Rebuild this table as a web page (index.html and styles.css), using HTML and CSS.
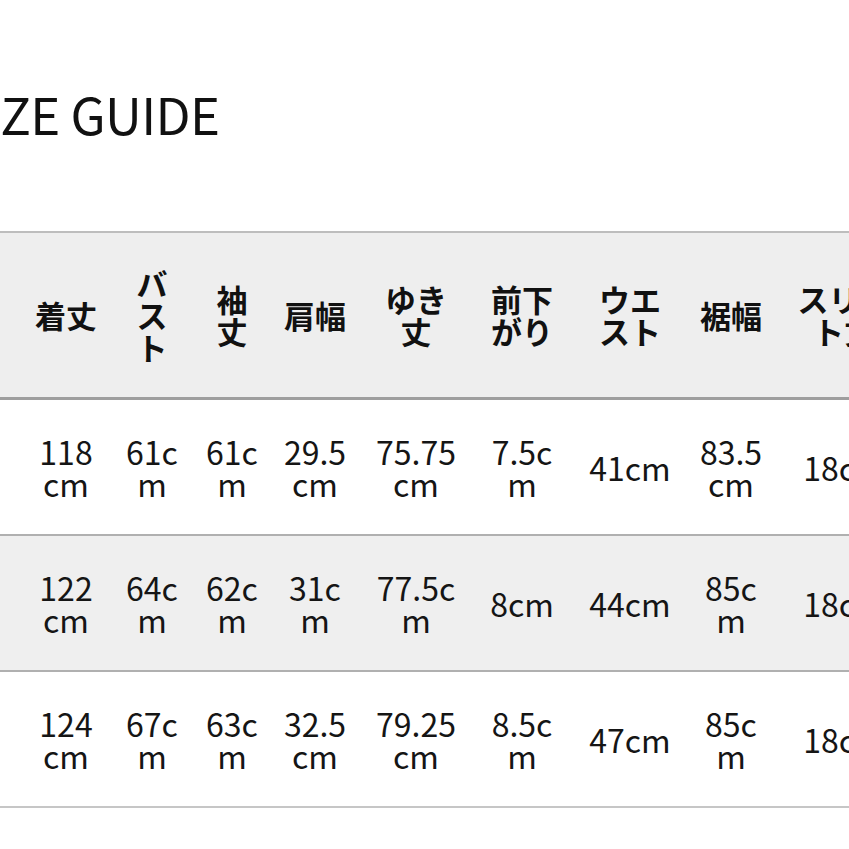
FILE: index.html
```html
<!DOCTYPE html>
<html lang="ja">
<head>
<meta charset="utf-8">
<title>SIZE GUIDE</title>
<link rel="stylesheet" href="styles.css">
</head>
<body>
<main class="page">
  <h1 class="title">SIZE GUIDE</h1>
  <table class="size-table">
    <colgroup>
      <col class="c-size">
      <col class="c-len">
      <col class="c-bust">
      <col class="c-sleeve">
      <col class="c-shoulder">
      <col class="c-yuki">
      <col class="c-front">
      <col class="c-waist">
      <col class="c-hem">
      <col class="c-slit">
    </colgroup>
    <thead>
      <tr>
        <th>サイズ</th>
        <th>着丈</th>
        <th>バ<br>ス<br>ト</th>
        <th>袖<br>丈</th>
        <th>肩幅</th>
        <th>ゆき<br>丈</th>
        <th>前下<br>がり</th>
        <th>ウエ<br>スト</th>
        <th>裾幅</th>
        <th>スリッ<br>ト丈</th>
      </tr>
    </thead>
    <tbody>
      <tr>
        <td>S</td>
        <td>118<br>cm</td>
        <td>61c<br>m</td>
        <td>61c<br>m</td>
        <td>29.5<br>cm</td>
        <td>75.75<br>cm</td>
        <td>7.5c<br>m</td>
        <td>41cm</td>
        <td>83.5<br>cm</td>
        <td>18cm</td>
      </tr>
      <tr class="alt">
        <td>M</td>
        <td>122<br>cm</td>
        <td>64c<br>m</td>
        <td>62c<br>m</td>
        <td>31c<br>m</td>
        <td>77.5c<br>m</td>
        <td>8cm</td>
        <td>44cm</td>
        <td>85c<br>m</td>
        <td>18cm</td>
      </tr>
      <tr>
        <td>L</td>
        <td>124<br>cm</td>
        <td>67c<br>m</td>
        <td>63c<br>m</td>
        <td>32.5<br>cm</td>
        <td>79.25<br>cm</td>
        <td>8.5c<br>m</td>
        <td>47cm</td>
        <td>85c<br>m</td>
        <td>18cm</td>
      </tr>
    </tbody>
  </table>
</main>
</body>
</html>
```

FILE: styles.css
```css
html, body {
  margin: 0;
  padding: 0;
  background: #ffffff;
  overflow: hidden;
}

.page {
  width: 849px;
  height: 849px;
  overflow: hidden;
  font-family: "Noto Sans CJK JP", "Noto Sans", sans-serif;
  color: #111111;
}

.title {
  margin: 88px 0 0 -44px;
  font-size: 51px;
  line-height: 51px;
  font-weight: 400;
  letter-spacing: -0.6px;
  white-space: nowrap;
}

.size-table {
  margin: 92px 0 0 -137px;
  border-collapse: separate;
  border-spacing: 0;
  table-layout: fixed;
  width: 1050px;
}

.c-size { width: 160px; }
.c-len { width: 86px; }
.c-bust { width: 86px; }
.c-sleeve { width: 74px; }
.c-shoulder { width: 92px; }
.c-yuki { width: 110px; }
.c-front { width: 102px; }
.c-waist { width: 114px; }
.c-hem { width: 88px; }
.c-slit { width: 138px; }

.size-table th,
.size-table td {
  box-sizing: border-box;
  padding: 0;
  text-align: center;
  vertical-align: middle;
  white-space: nowrap;
}

.size-table th {
  height: 169px;
  background: #eeeeee;
  border-top: 2px solid #bdbdbd;
  border-bottom: 3px solid #9e9e9e;
  font-size: 31px;
  line-height: 32px;
  font-weight: 700;
  color: #111111;
}

.size-table td {
  height: 136px;
  background: #ffffff;
  border-bottom: 2px solid #b0b0b0;
  font-size: 32px;
  line-height: 32px;
  font-weight: 400;
  color: #151515;
}

.size-table tr.alt td {
  background: #efefef;
}

.size-table tbody tr:last-child td {
  border-bottom-color: #c6c6c6;
}
```
